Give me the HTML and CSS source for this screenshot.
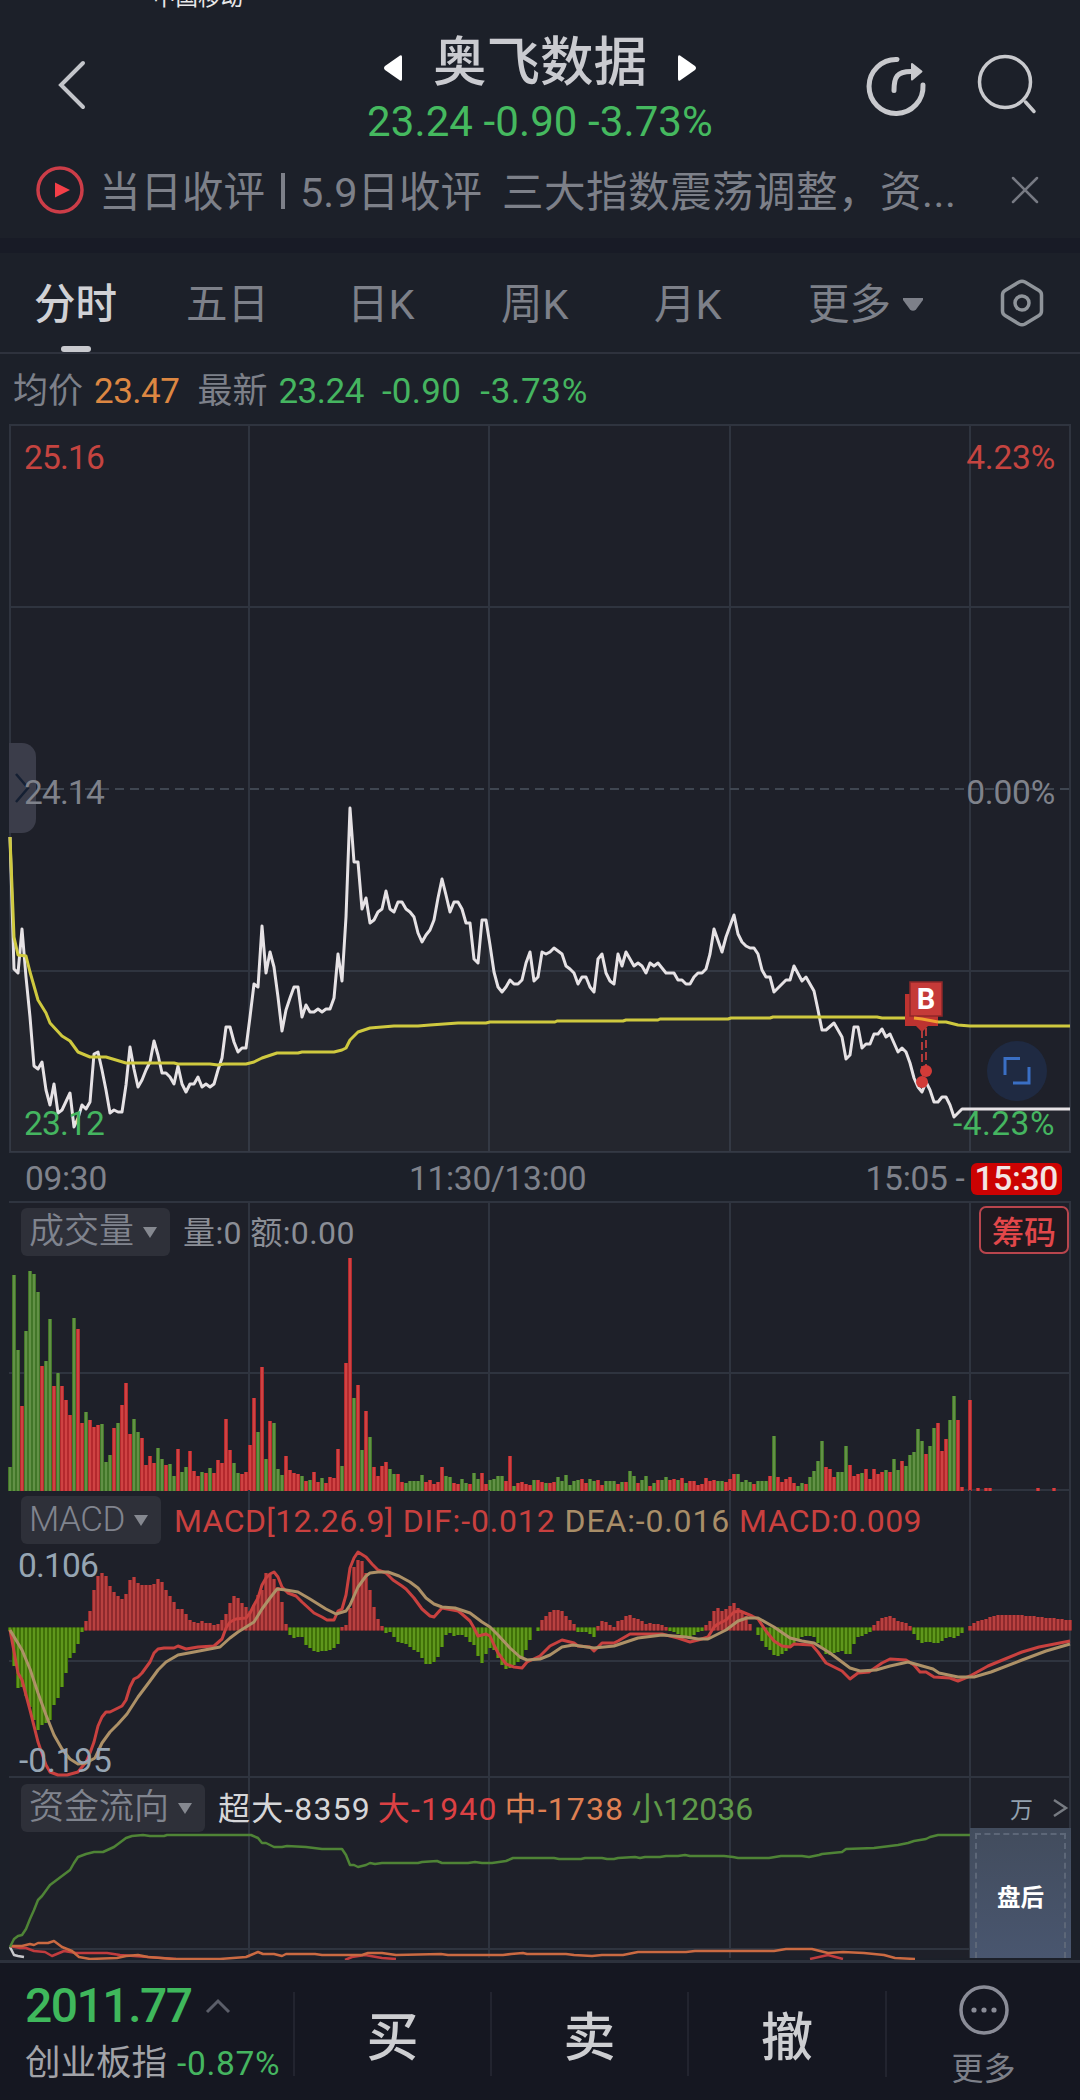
FILE: index.html
```html
<!DOCTYPE html>
<html lang="zh-CN">
<head>
    <meta charset="UTF-8">
    <meta name="viewport" content="width=device-width, initial-scale=1.0">
    <title>奥飞数据</title>
    <link rel="stylesheet" href="styles.css">
</head>
<body>
    <div class="status-bar">中国移动</div>

    <header class="header">
        <svg class="icon-back" width="30" height="52" viewBox="0 0 30 52"><path d="M26 4L4 26L26 48"/></svg>
        <div class="stock">
            <div class="stock-name">
                <svg width="18" height="28" viewBox="0 0 18 28"><path d="M16 1.5Q18 .5 18 3V25Q18 27.500 16 26.500L1 16Q-1 14 1 12Z"/></svg>
                <h1>奥飞数据</h1>
                <svg width="18" height="28" viewBox="0 0 18 28"><path d="M2 1.500Q0 .5 0 3V25Q0 27.500 2 26.500L17 16Q19 14 17 12Z"/></svg>
            </div>
            <div class="stock-price">23.24 -0.90 -3.73%</div>
        </div>
        <div class="header-icons">
            <svg width="62" height="62" viewBox="0 0 62 62">
                <path class="share" d="M32 4.500A27 27 0 1 0 58 30M29 35.500C29 22 32 16.500 46 16.500"/>
                <path class="share-head" d="M47 9L56.500 16.500L47 24.500Z"/>
            </svg>
            <svg width="62" height="62" viewBox="0 0 62 62">
                <circle class="search" cx="29" cy="27" r="25.500"/>
                <path class="search" d="M49.500 47L58 56.500"/>
            </svg>
        </div>
    </header>

    <div class="news">
        <svg width="48" height="48" viewBox="0 0 48 48">
            <circle cx="24" cy="24" r="22"/>
            <path d="M19 16.500L34 24L19 31.500Z"/>
        </svg>
        <p><span class="news-tag">当日收评</span><span class="news-bar"></span><span class="news-date">5.9日收评</span><span class="news-title">三大指数震荡调整，资...</span></p>
        <svg class="icon-close" width="26" height="26" viewBox="0 0 26 26"><path d="M1 1L25 25M25 1L1 25"/></svg>
    </div>

    <nav class="tabs">
        <a class="tab active">分时</a>
        <a class="tab">五日</a>
        <a class="tab">日K</a>
        <a class="tab">周K</a>
        <a class="tab">月K</a>
        <a class="tab">更多<svg width="20" height="13" viewBox="0 0 20 13"><path d="M0 0H20V2L13 11.500Q10 14 7 11.500L0 2Z"/></svg></a>
        <svg class="icon-setting" width="44" height="48" viewBox="0 0 44 48">
            <path d="M19 3Q22 1.500 25 3L39 11.500Q41.500 13 41.500 16V32Q41.500 35 39 36.500L25 45Q22 46.500 19 45L5 36.500Q2.500 35 2.500 32V16Q2.500 13 5 11.500Z"/>
            <circle cx="22" cy="24" r="7"/>
        </svg>
    </nav>

    <div class="quote">
        <span class="quote-label">均价</span><b class="orange">23.47</b>
        <span class="quote-label latest">最新</span><b class="green">23.24</b><b class="green change">-0.90</b><b class="green percent">-3.73%</b>
    </div>

    <section class="panel price">
        <svg class="chart" width="1080" height="729" viewBox="0 0 1080 729">
            <rect class="chart-bg" x="10" y="0" width="1061" height="729"/>
            <path class="grid" d="M9 1H1071M10 183H1070M10 547H1070M9 728H1071M10 0V729M249 0V729M489 0V729M730 0V729M970 0V729M1070 0V729"/>
            <path class="grid-mid" d="M10 365H1070"/>
            <polygon id="priceArea" class="price-area"/>
            <polyline id="priceLine" class="price-line"/>
            <polyline class="avg-line" points="10,413 14,513 18,531 26,532 30,548 38,576 46,589 50,599 62,612 70,617 78,628 90,633 106,633 126,639 174,639 178,640 210,640 218,641 224,640 246,640 254,638 262,634 277,629 298,629 302,628 334,628 342,626 346,624 350,616 358,608 370,604 394,602 418,602 430,601 458,599 486,599 490,598 555,598 557,597 623,597 626,596 658,596 660,595 728,595 731,594 770,594 773,593 877,593 882,594 914,594 922,595 938,598 946,598 958,601 970,602 1070,602"/>
            <path class="buy-back" d="M905 570H938V602H928L922 608L916 602H905Z"/>
            <rect class="buy-box" x="910" y="558" width="32" height="34"/>
            <path class="buy-dash" d="M922 606V654M926 604V644"/>
            <circle class="buy-dot" cx="926" cy="647" r="6"/>
            <circle class="buy-dot" cx="922" cy="658" r="6"/>
            <path class="avg-cross" d="M914 594L922 595L938 598"/>
        </svg>
        <div class="drawer"><svg width="16" height="30" viewBox="0 0 16 30"><path d="M2 1L14 15L2 29"/></svg></div>
        <span class="label top-left red">25.16</span>
        <span class="label top-right red">4.23%</span>
        <span class="label mid-left">24.14</span>
        <span class="label mid-right">0.00%</span>
        <span class="label bottom-left green">23.12</span>
        <span class="label bottom-right green">-4.23%</span>
        <span class="buy-text">B</span>
        <div class="expand"><svg width="28" height="28" viewBox="0 0 28 28"><path d="M17 1.500H2V18M26 10V26H10"/></svg></div>
    </section>

    <div class="times">
        <span>09:30</span>
        <span>11:30/13:00</span>
        <span class="after-hours">15:05 - <b>15:30</b></span>
    </div>

    <section class="panel volume">
        <svg class="chart" width="1080" height="289" viewBox="0 0 1080 289">
            <rect class="chart-bg" x="10" y="0" width="1061" height="289"/>
            <path class="grid" d="M9 1H1071M9 172H1071M9 289H1071M249 0V289M489 0V289M730 0V289M970 0V289M1070 0V289"/>
            <g id="volumeBars"></g>
        </svg>
        <div class="panel-head">
            <span class="select">成交量<i></i></span>
            <span class="values vol-values">量:0 额:0.00</span>
            <button class="chips">筹码</button>
        </div>
    </section>

    <section class="panel macd">
        <svg class="chart" width="1080" height="288" viewBox="0 0 1080 288">
            <rect class="chart-bg" x="10" y="2" width="1061" height="286"/>
            <path class="grid" d="M9 171H1071M9 287H1071M249 0V288M489 0V288M730 0V288M970 0V288M1070 0V288"/>
            <g id="macdBars"></g>
            <polyline class="dif" points="10,140 18,183 22,190 30,220 38,252 46,275 50,282 58,285 67,285 78,282 86,272 90,263 94,252 98,236 102,227 106,222 110,222 122,216 126,210 130,197 134,189 138,187 142,183 150,172 154,163 158,159 164,158 174,158 178,156 186,159 198,157 214,156 222,149 226,138 230,132 236,129 246,128 250,123 254,115 258,108 262,95 266,88 270,84 274,82 278,87 282,97 288,103 296,106 302,112 314,123 322,127 327,130 334,130 338,121 342,119 346,105 350,78 354,68 358,62 366,67 372,74 378,80 386,83 393,90 402,96 406,99 414,108 422,119 430,126 434,127 442,118 458,121 462,124 470,131 474,138 478,146 486,144 490,146 494,155 498,163 506,174 514,177 522,178 527,172 540,166 550,156 562,150 574,153 578,156 590,157 594,161 602,153 614,153 618,151 630,144 650,144 662,144 678,148 690,152 698,150 708,147 714,137 718,134 726,130 734,122 740,121 752,126 758,129 766,141 774,151 782,156 790,157 794,154 812,155 818,162 826,173 842,181 850,189 858,183 869,182 882,173 890,169 906,170 914,175 920,182 926,182 934,187 950,188 958,191 970,186 988,176 1005,169 1022,162 1039,157 1070,151"/>
            <polyline class="dea" points="10,140 22,160 30,179 38,203 46,225 54,245 62,259 70,269 78,274 86,273 95,268 102,253 110,242 118,234 127,224 138,207 150,191 158,180 166,172 178,165 194,162 220,157 230,148 238,142 246,137 254,132 262,119 270,108 277,99 286,100 298,102 310,109 326,119 336,124 346,121 350,115 354,106 358,97 366,86 370,83 378,82 388,82 399,86 410,92 418,98 426,108 434,114 442,117 455,118 470,123 482,132 490,137 498,145 510,158 520,167 527,170 540,169 550,165 562,157 573,155 594,158 614,156 638,148 662,145 686,147 698,149 708,149 726,140 738,131 747,128 758,128 774,137 790,148 802,151 814,153 830,163 850,178 860,181 876,180 890,176 908,172 933,179 939,183 958,187 974,187 991,182 1022,170 1046,161 1070,154"/>
        </svg>
        <div class="panel-head">
            <span class="select">MACD<i></i></span>
            <span class="values macd-values"><span class="dif-text">MACD[12.26.9]</span><span class="dif-text wide">DIF:-0.012</span><span class="dea-text wide">DEA:-0.016</span><span class="dif-text">MACD:0.009</span></span>
        </div>
        <span class="scale scale-max">0.106</span>
        <span class="scale scale-min">-0.195</span>
    </section>

    <section class="panel flow">
        <svg class="chart" width="1080" height="180" viewBox="0 0 1080 180">
            <rect class="chart-bg" x="10" y="0" width="1061" height="180"/>
            <path class="grid" d="M9 171H970M249 0V180M489 0V180M730 0V180M970 0V180M1070 0V180"/>
            <polyline class="flow-super" points="10,169 14,177 18,178 24,179"/>
            <polyline class="flow-big" points="10,168 20,170 26,170 34,173 45,174 52,178 64,173 76,175 107,175 120,177 148,179 176,181"/>
            <polyline class="flow-big" points="345,182 352,179 365,177 382,180 396,181"/>
            <polyline class="flow-big" points="810,181 828,177 843,181"/>
            <polyline class="flow-mid" points="10,168 22,168 30,166 34,167 38,165 48,165 54,163 62,169 72,173 79,179 90,181 117,180 126,178 138,177 148,179 174,181 220,181 246,179 258,174 263,176 274,176 282,178 286,176 315,176 322,177 362,177 368,175 382,175 396,177 441,176 448,177 503,177 511,176 523,175 527,176 566,176 574,177 592,178 602,177 623,177 638,174 686,174 695,173 774,173 786,171 812,171 828,175 843,174 864,175 884,177 895,180 915,181"/>
            <polyline class="flow-small" points="10,169 14,161 18,158 22,157 26,151 30,141 34,132 38,122 42,118 50,107 58,101 70,92 74,85 78,79 86,76 94,74 103,74 114,69 126,60 132,58 143,57 150,58 164,58 167,57 251,57 258,60 262,65 266,65 274,69 282,69 287,68 306,69 322,71 342,71 346,77 350,87 354,87 358,89 366,87 370,85 375,86 382,85 418,85 422,84 437,83 442,85 468,85 475,84 482,85 492,85 506,83 513,80 554,80 559,81 581,81 585,80 602,80 607,81 614,81 618,80 635,79 640,80 645,79 660,79 666,78 678,78 685,77 690,78 724,78 733,79 738,80 769,80 781,78 802,78 809,79 819,77 822,76 842,74 846,71 874,70 898,67 908,65 914,63 926,61 930,59 938,57 970,57"/>
        </svg>
        <div class="panel-head">
            <span class="select">资金流向<i></i></span>
            <span class="values flow-values"><span class="white">超大-8359</span><span class="bright-red">大-1940</span><span class="coral">中-1738</span><span class="leaf">小12036</span></span>
            <span class="unit">万</span>
            <svg class="icon-next" width="14" height="18" viewBox="0 0 14 18"><path d="M1 1L13 9L1 17"/></svg>
        </div>
        <div class="closed"><span>盘后</span></div>
    </section>

    <footer class="footer">
        <div class="index">
            <div class="index-value">2011.77<svg width="26" height="15" viewBox="0 0 26 15"><path d="M2 13L13 2L24 13"/></svg></div>
            <div class="index-name">创业板指<span>-0.87%</span></div>
        </div>
        <a class="trade">买</a>
        <a class="trade">卖</a>
        <a class="trade">撤</a>
        <a class="more">
            <svg width="50" height="52" viewBox="0 0 50 52">
                <circle class="ring" cx="25" cy="26" r="23"/>
                <circle cx="15" cy="26" r="2.600"/><circle cx="25" cy="26" r="2.600"/><circle cx="35" cy="26" r="2.600"/>
            </svg>
            更多
        </a>
    </footer>

    <script src="charts.js"></script>
</body>
</html>
```
FILE: styles.css
```css
* {
    box-sizing: border-box;
}
body, html {
    margin: 0;
    padding: 0;
    background: #1c2029;
    font-family: Roboto, "Noto Sans CJK SC", sans-serif;
}
body {
    width: 1080px;
    height: 2100px;
    overflow: hidden;
}
svg {
    display: block;
    flex: none;
    overflow: visible;
}
.green { color: #45b560; }
.orange { color: #dc8742; }
.red { color: #c54440; }

/* top */
.status-bar {
    height: 9px;
    padding-left: 153px;
    overflow: hidden;
    display: flex;
    align-items: flex-end;
    font-size: 22.500px;
    line-height: 24px;
    color: #e8e8ea;
}
.header {
    height: 141px;
    display: grid;
    grid-template-columns: 1fr 460px 1fr;
}
.icon-back {
    margin: 50px 0 0 57px;
    fill: none;
    stroke: #c3c5ca;
    stroke-width: 4;
    stroke-linecap: round;
}
.stock {
    padding-top: 24px;
    display: flex;
    flex-direction: column;
    align-items: center;
}
.stock-name {
    display: flex;
    align-items: center;
    gap: 31px;
    height: 60px;
}
.stock-name svg {
    fill: #fff;
    margin-top: 10px;
}
.stock-name h1 {
    margin: 0;
    font-size: 53.500px;
    line-height: 60px;
    font-weight: 500;
    color: #cacbd0;
}
.stock-price {
    margin-top: -1px;
    font-size: 42px;
    line-height: 60px;
    letter-spacing: 0.100px;
    color: #45b95f;
    white-space: nowrap;
}
.header-icons {
    display: flex;
    justify-content: flex-end;
    gap: 49px;
    padding: 46px 42px 0 0;
}
.share, .search {
    fill: none;
    stroke: #c8c9cd;
    stroke-linecap: round;
}
.share { stroke-width: 5; }
.search { stroke-width: 3.500; }
.share-head {
    fill: #c8c9cd;
    stroke: #c8c9cd;
    stroke-width: 2;
    stroke-linejoin: round;
}
.news {
    height: 88px;
    padding: 0 42px 8px 36px;
    display: flex;
    align-items: center;
}
.news circle {
    fill: none;
    stroke: #cc3d48;
    stroke-width: 3.500;
}
.news path {
    fill: #f43f48;
}
.news p {
    flex: 1;
    margin: 5px 0 0 15px;
    display: flex;
    align-items: center;
    font-size: 41.500px;
    line-height: 60px;
    color: #7d8089;
    white-space: nowrap;
}
.news-bar {
    width: 4px;
    height: 36px;
    margin: -4px 15px 0 16px;
    background: #7d8089;
}
.news-date {
    margin-right: 20px;
}
.news-title {
    letter-spacing: 0.500px;
}
.news .icon-close path {
    fill: none;
    stroke: #777a83;
    stroke-width: 2.500;
    stroke-linecap: round;
}
.tabs {
    height: 116px;
    border-top: 15px solid #181b26;
    border-bottom: 2px solid #2e323d;
    padding: 0 36px 0 34px;
    display: grid;
    grid-template-columns: 152px 161px 154px 153px 154px auto 44px;
    align-items: center;
}
.tab {
    position: relative;
    padding-top: 5px;
    font-size: 41.500px;
    line-height: 94px;
    color: #7d8089;
    white-space: nowrap;
}
.tab svg {
    display: inline-block;
    margin-left: 12px;
    vertical-align: 8px;
    fill: #7d8089;
}
.tab.active {
    color: #d0d1d5;
    font-weight: 500;
}
.tab.active::after {
    content: "";
    position: absolute;
    left: 27px;
    bottom: 0;
    width: 30px;
    height: 6px;
    border-radius: 3px;
    background: #c8c9ce;
}
.icon-setting {
    fill: none;
    stroke: #8f949a;
    stroke-width: 3.500;
}
.quote {
    height: 70px;
    padding: 5px 0 0 13px;
    display: flex;
    align-items: center;
    font-size: 35px;
    line-height: 65px;
    letter-spacing: -0.500px;
}
.quote b {
    font-weight: 400;
    margin-right: 19px;
}
.quote .change {
    margin-left: -1px;
    letter-spacing: 0.300px;
}
.quote .percent {
    letter-spacing: 0.700px;
}
.quote-label {
    margin-right: 11px;
    letter-spacing: 0;
    color: #7d8089;
}
.latest {
    margin-left: -1px;
}

/* chart panels */
.panel {
    position: relative;
    display: grid;
}
.panel > .chart, .panel > .panel-head {
    grid-area: 1 / 1;
}
.chart-bg { fill: #1e2029; }
.grid {
    fill: none;
    stroke: #2f343f;
    stroke-width: 2;
}
.grid-mid {
    stroke: #3f4651;
    stroke-width: 2;
    stroke-dasharray: 9 6;
}
.price { height: 729px; }
.volume { height: 289px; }
.macd { height: 288px; }
.flow {
    height: 182px;
    overflow: hidden;
}
.price-area { fill: rgba(255, 255, 255, 0.027); }
.price-line, .avg-line, .avg-cross, .dif, .dea {
    fill: none;
    stroke-linejoin: round;
    stroke-width: 3;
}
.price-line { stroke: #e6e2e5; }
.avg-line { stroke: #cfc93f; }
.avg-cross { stroke: #f0a030; }
.buy-back { fill: #bd3330; }
.buy-box {
    fill: #c53a38;
    stroke: #8f2729;
    stroke-width: 1.500;
}
.buy-dash {
    stroke: #b03a3a;
    stroke-width: 2;
    stroke-dasharray: 8 4;
}
.buy-dot { fill: #d23b38; }
.buy-text {
    position: absolute;
    left: 910px;
    top: 559px;
    width: 32px;
    text-align: center;
    font-size: 29px;
    line-height: 32px;
    font-weight: 700;
    color: #fff;
}
.label, .scale {
    position: absolute;
    font-size: 33.500px;
    line-height: 40px;
    letter-spacing: -0.800px;
}
.label { color: #7f828b; }
.label.red { color: #c54440; }
.label.green { color: #45b560; }
.top-left, .top-right { top: 14px; }
.mid-left, .mid-right { top: 349px; }
.bottom-left, .bottom-right { top: 680px; }
.top-left, .mid-left, .bottom-left { left: 24px; }
.top-right, .mid-right, .bottom-right {
    right: 25px;
    letter-spacing: -0.200px;
}
.bottom-right { letter-spacing: 0.500px; }
.drawer {
    position: absolute;
    left: 9px;
    top: 319px;
    width: 27px;
    height: 90px;
    padding: 30px 0 0 5px;
    border-radius: 0 14px 14px 0;
    background: #3b3d4a;
}
.drawer path {
    fill: none;
    stroke: #152033;
    stroke-width: 2.500;
}
.expand {
    position: absolute;
    left: 987px;
    top: 617px;
    width: 60px;
    height: 60px;
    display: grid;
    place-items: center;
    border-radius: 50%;
    background: #1f2a42;
}
.expand path {
    fill: none;
    stroke: #3a6fc4;
    stroke-width: 3;
}
.times {
    height: 48px;
    padding: 4px 18px 0 25px;
    display: grid;
    grid-template-columns: 384px auto 1fr;
    align-items: center;
    font-size: 33.500px;
    line-height: 44px;
    letter-spacing: -0.300px;
    color: #7f828b;
}
.after-hours {
    display: flex;
    justify-content: flex-end;
    align-items: center;
    white-space: pre;
}
.after-hours b {
    margin-left: -2px;
    padding: 0 4px;
    border-radius: 6px;
    background: #cc0202;
    line-height: 32px;
    font-weight: 500;
    color: #f3e4e4;
}
.panel-head {
    height: 48px;
    padding: 0 11px 0 21px;
    display: flex;
    align-items: center;
    z-index: 1;
}
.volume .panel-head { margin-top: 7px; }
.macd .panel-head, .flow .panel-head { margin-top: 6px; }
.select {
    height: 48px;
    padding: 0 13px 0 8px;
    display: flex;
    align-items: center;
    gap: 9px;
    border-radius: 6px;
    background: #2e3039;
    font-size: 35px;
    line-height: 48px;
    font-weight: 350;
    color: #80848e;
}
.macd .select {
    letter-spacing: -0.500px;
}
.select i {
    border: 7.500px solid transparent;
    border-top: 11px solid #858890;
    border-bottom: 0;
}
.values {
    display: flex;
    margin-left: 13px;
    padding-top: 2px;
    font-size: 32px;
    line-height: 48px;
    letter-spacing: 0.400px;
    color: #8b8e96;
    white-space: pre;
}
.chips {
    width: 90px;
    height: 48px;
    margin: -5px 0 0 auto;
    padding: 0;
    border: 2px solid #b8454d;
    border-radius: 7px;
    background: #20191f;
    font: 500 32px/44px "Noto Sans CJK SC", sans-serif;
    color: #e2474a;
}
.macd-values, .flow-values { gap: 9px; }
.flow-values { letter-spacing: 1.150px; gap: 7px; }
.flow-values .leaf { letter-spacing: 0; }
.values .wide { letter-spacing: 0.850px; }
.dif-text { color: #c9403f; }
.dea-text { color: #a98e68; }
.dif { stroke: #c9413f; }
.dea { stroke: #ad9167; }
.scale { color: #96a5b3; }
.scale-max { left: 18px; top: 56px; }
.scale-min {
    left: 19px;
    top: 251px;
    letter-spacing: -0.100px;
}
.bar-up { stroke: #cf4343; }
.bar-down { stroke: #629146; }
.bar-up-bg { stroke: #a81f24; }
.bar-down-bg { stroke: #356c1c; }
.bar-up, .bar-down { stroke-width: 2.600; }
.bar-up-bg, .bar-down-bg { stroke-width: 4; }
.macd .bar-up { stroke: #b84140; }
.macd .bar-up-bg { stroke: #7c2225; }
.macd .bar-down { stroke: #5f981c; }
.macd .bar-down-bg { stroke: #346200; }
.white { color: #d6d6d8; }
.bright-red { color: #dc4144; }
.coral { color: #e08052; }
.leaf { color: #5f9a4a; }
.flow-super, .flow-big, .flow-mid, .flow-small {
    fill: none;
    stroke-width: 2.500;
    stroke-linejoin: round;
}
.flow-super { stroke: #c8c8cc; }
.flow-big { stroke: #c23c3e; }
.flow-mid { stroke: #cb6a42; }
.flow-small { stroke: #4f8436; }
.unit {
    margin-left: auto;
    font-size: 23px;
    color: #93a1af;
}
.icon-next {
    margin: 0 2px 0 20px;
    fill: none;
    stroke: #777b82;
    stroke-width: 2.500;
}
.closed {
    position: absolute;
    left: 970px;
    top: 50px;
    width: 101px;
    height: 130px;
    padding: 5px 5px 0;
    background: linear-gradient(#424c5d, #49566f);
}
.closed span {
    display: block;
    height: 125px;
    border: 2px dashed #5d6778;
    border-bottom: 0;
    text-align: center;
    font-size: 23.500px;
    line-height: 127px;
    font-weight: 700;
    color: #fff;
}

/* bottom bar */
.footer {
    height: 140px;
    border-top: 3px solid #2c313c;
    background: #151721;
    display: grid;
    grid-template-columns: 293px 197px 197px 198px 195px;
}
.index {
    padding: 18px 0 0 25px;
}
.index-value {
    display: flex;
    align-items: center;
    font-size: 48px;
    line-height: 50px;
    font-weight: 500;
    letter-spacing: -1.500px;
    color: #3fb85c;
}
.index-value svg {
    margin-left: 13px;
    fill: none;
    stroke: #5b5e69;
    stroke-width: 3;
}
.index-name {
    display: flex;
    font-size: 35.500px;
    line-height: 65px;
    color: #a2a3a8;
    white-space: nowrap;
}
.index-name span {
    margin-left: 10px;
    font-size: 33.500px;
    letter-spacing: 0.700px;
    color: #45b560;
}
.trade {
    height: 84px;
    margin-top: 29px;
    border-left: 2px solid #22242f;
    text-align: center;
    font-size: 52px;
    line-height: 94px;
    font-weight: 500;
    color: #cdced1;
}
.more {
    display: flex;
    flex-direction: column;
    align-items: center;
    padding-top: 21px;
    font-size: 32px;
    line-height: 67px;
    color: #7d8089;
    border-left: 2px solid #22242f;
    border-image: linear-gradient(transparent 29px, #22242f 29px, #22242f 113px, transparent 113px) 1;
}
.more circle { fill: #8a8c97; }
.more .ring {
    fill: none;
    stroke: #8a8c97;
    stroke-width: 3.500;
}
```
FILE: charts.js
```javascript
// one sample per minute, 4px apart
const STEP = 4;
const LEFT = 10;
const NS = 'http://www.w3.org/2000/svg';

// price line: x,y pairs inside the 1080x729 chart
const price = '10,413 14,545 18,549 22,505 26,553 30,593 34,642 38,645 42,638 46,666 50,681 54,660 58,689 62,686 70,669 74,703 78,694 82,681 86,685 90,678 94,630 98,628 102,646 106,666 110,689 114,686 118,688 122,688 126,661 130,623 134,645 138,663 142,656 146,646 150,638 154,617 158,631 162,649 166,649 170,653 174,660 178,642 182,660 186,668 190,660 194,660 198,653 202,663 206,660 210,663 214,660 218,646 222,634 226,603 230,603 234,618 238,628 242,624 246,624 250,593 254,560 258,563 262,502 266,549 270,528 274,543 278,573 282,607 286,586 290,574 294,563 298,563 302,593 306,581 310,588 314,588 318,585 322,588 326,585 330,585 334,574 338,530 342,557 346,493 350,384 354,438 358,438 362,485 366,474 370,499 374,496 378,488 382,485 386,467 390,485 394,488 398,478 402,478 406,485 410,488 414,493 418,509 422,518 426,511 430,506 434,496 438,474 442,455 446,471 450,488 454,478 458,478 462,485 466,499 470,499 474,535 478,539 482,496 486,496 490,521 494,548 498,563 502,568 506,563 510,556 514,560 518,560 522,556 526,539 530,528 534,557 538,553 542,528 546,530 550,528 554,524 562,530 566,542 570,545 574,549 578,560 582,553 586,553 590,563 594,568 598,535 602,530 606,549 610,557 614,560 618,530 622,542 626,528 634,542 638,539 642,542 646,549 650,539 654,542 658,539 666,549 674,549 678,556 682,556 686,560 690,560 694,553 698,549 702,549 706,545 710,530 714,505 722,528 726,513 734,491 738,510 742,518 746,522 750,524 754,524 758,530 762,546 766,553 770,553 774,568 782,560 786,556 790,556 794,542 802,557 806,553 814,567 818,586 822,606 826,606 834,599 842,613 846,635 850,631 854,603 858,603 862,624 866,620 870,620 874,610 878,610 882,605 886,613 890,610 898,628 902,624 906,628 910,639 914,654 918,663 922,668 926,658 930,666 934,678 938,678 942,673 946,673 950,681 954,693 962,685 1070,685';

// volume: r/g + height
const volume = 'g24 g216 g141 r85 g160 g220 g217 g199 r125 g130 g172 r105 g118 r105 r91 r76 g173 r162 r68 g79 r71 r64 r66 g67 g29 g36 r63 g68 r86 r108 r57 g72 g59 r53 r26 r35 r28 g43 g32 r26 g27 g15 r42 g19 g24 r40 r20 r15 g19 r18 g23 r18 r31 r28 r72 r41 g28 g18 r17 r19 r46 r93 g59 r124 g32 r70 g68 g22 g16 r35 r21 r18 r17 g15 r10 g11 r19 r9 g13 r8 r14 r13 r42 g25 r128 r233 g93 r106 g41 r80 g54 r24 r15 r25 r29 g22 g17 r17 r9 g8 g10 g10 g10 g16 r9 r11 r7 r9 r24 g15 g14 r8 r7 g12 g8 r7 g18 g12 r18 r7 g11 g12 g15 g15 r10 r35 g5 r8 r9 r7 r6 g11 r11 r9 g8 r8 r9 g14 g10 g16 g6 g10 g11 r12 r8 g12 g10 r11 r6 g10 g10 g10 r7 g9 r9 g20 g15 r8 g11 g15 r5 g8 r11 g11 g14 r11 r12 g11 r13 g8 r10 r10 r6 r7 r13 r10 r11 g10 g10 r9 r12 r17 g17 g9 g11 g9 r7 g10 g10 g10 r15 g55 r14 r9 r12 r14 r8 g5 g8 r7 g14 g20 g30 g50 r24 r22 r14 g19 g19 g45 r26 r15 r17 g18 r22 r12 r22 r17 r19 g21 r19 g32 g21 r30 g25 g36 g39 g62 g50 r37 g45 g63 r68 r40 r52 g71 g95 r71 r4 r0 r91 r0 r3 r0 r3 r3 r0 r0 r0 r0 r0 r0 r0 r0 r0 r0 r0 r3 r0 r0 r0 r3';

// macd columns, positive = above zero
const macd = [-2, -37, -59, -58, -67, -78, -91, -101, -96, -94, -91, -76, -69, -58, -44, -29, -24, -15, -3, 8, 18, 39, 53, 56, 53, 43, 37, 33, 30, 35, 49, 52, 46, 44, 44, 44, 45, 50, 47, 39, 33, 27, 20, 20, 15, 9, 7, 6, 8, 6, 6, 4, 5, 9, 15, 26, 33, 31, 26, 22, 18, 24, 34, 39, 56, 54, 50, 42, 27, 5, -6, -9, -8, -8, -16, -19, -22, -23, -22, -22, -21, -19, -15, 2, 4, 21, 62, 69, 68, 56, 39, 22, 10, 3, -4, -3, -8, -13, -14, -15, -18, -21, -23, -29, -35, -35, -33, -28, -18, -6, -4, -7, -6, -6, -8, -13, -16, -27, -34, -25, -19, -21, -29, -36, -40, -39, -36, -33, -29, -21, -11, 0, -2, 9, 13, 17, 19, 19, 18, 13, 9, 5, -3, -3, -3, -5, -8, 3, 8, 7, 4, 2, 8, 9, 13, 14, 11, 10, 8, 5, 6, 5, 5, 4, 2, -2, -3, -5, -7, -8, -8, -6, -3, -2, 4, 8, 18, 21, 18, 20, 23, 26, 21, 17, 13, 5, 0, -6, -12, -18, -21, -26, -27, -25, -22, -19, -14, -10, -8, -7, -7, -8, -14, -19, -25, -26, -24, -23, -22, -25, -25, -15, -8, -7, -5, -3, 4, 8, 11, 12, 13, 11, 8, 7, 6, 3, -5, -11, -14, -13, -13, -14, -14, -12, -9, -8, -9, -7, -4, 0, 3, 6, 8, 9, 10, 12, 13, 14, 14, 14, 14, 14, 14, 14, 13, 13, 13, 12, 12, 11, 11, 11, 10, 10, 9, 9];

function addBar(group, x, y1, y2, name) {
    const line = document.createElementNS(NS, 'line');
    line.setAttribute('x1', x);
    line.setAttribute('x2', x);
    line.setAttribute('y1', y1);
    line.setAttribute('y2', y2);
    line.setAttribute('class', name);
    group.appendChild(line);
}

function drawPrice() {
    document.getElementById('priceLine').setAttribute('points', price);
    document.getElementById('priceArea').setAttribute('points', price + ' 1070,728 10,728');
}

function drawVolume() {
    const group = document.getElementById('volumeBars');
    volume.split(' ').forEach((item, i) => {
        const height = Number(item.slice(1));
        if (!height) return;
        const name = item[0] === 'r' ? 'bar-up' : 'bar-down';
        const x = LEFT + i * STEP;
        addBar(group, x, 290, 290 - height, name + '-bg');
        addBar(group, x, 290, 290 - height, name);
    });
}

function drawMacd() {
    const group = document.getElementById('macdBars');
    macd.slice(0, 266).forEach((value, i) => {
        if (!value) return;
        const name = value > 0 ? 'bar-up' : 'bar-down';
        const x = LEFT + i * STEP;
        const from = value > 0 ? 140.5 : 137.5;
        addBar(group, x, from, 139 - value, name + '-bg');
        addBar(group, x, from, 139 - value, name);
    });
}

drawPrice();
drawVolume();
drawMacd();
```
